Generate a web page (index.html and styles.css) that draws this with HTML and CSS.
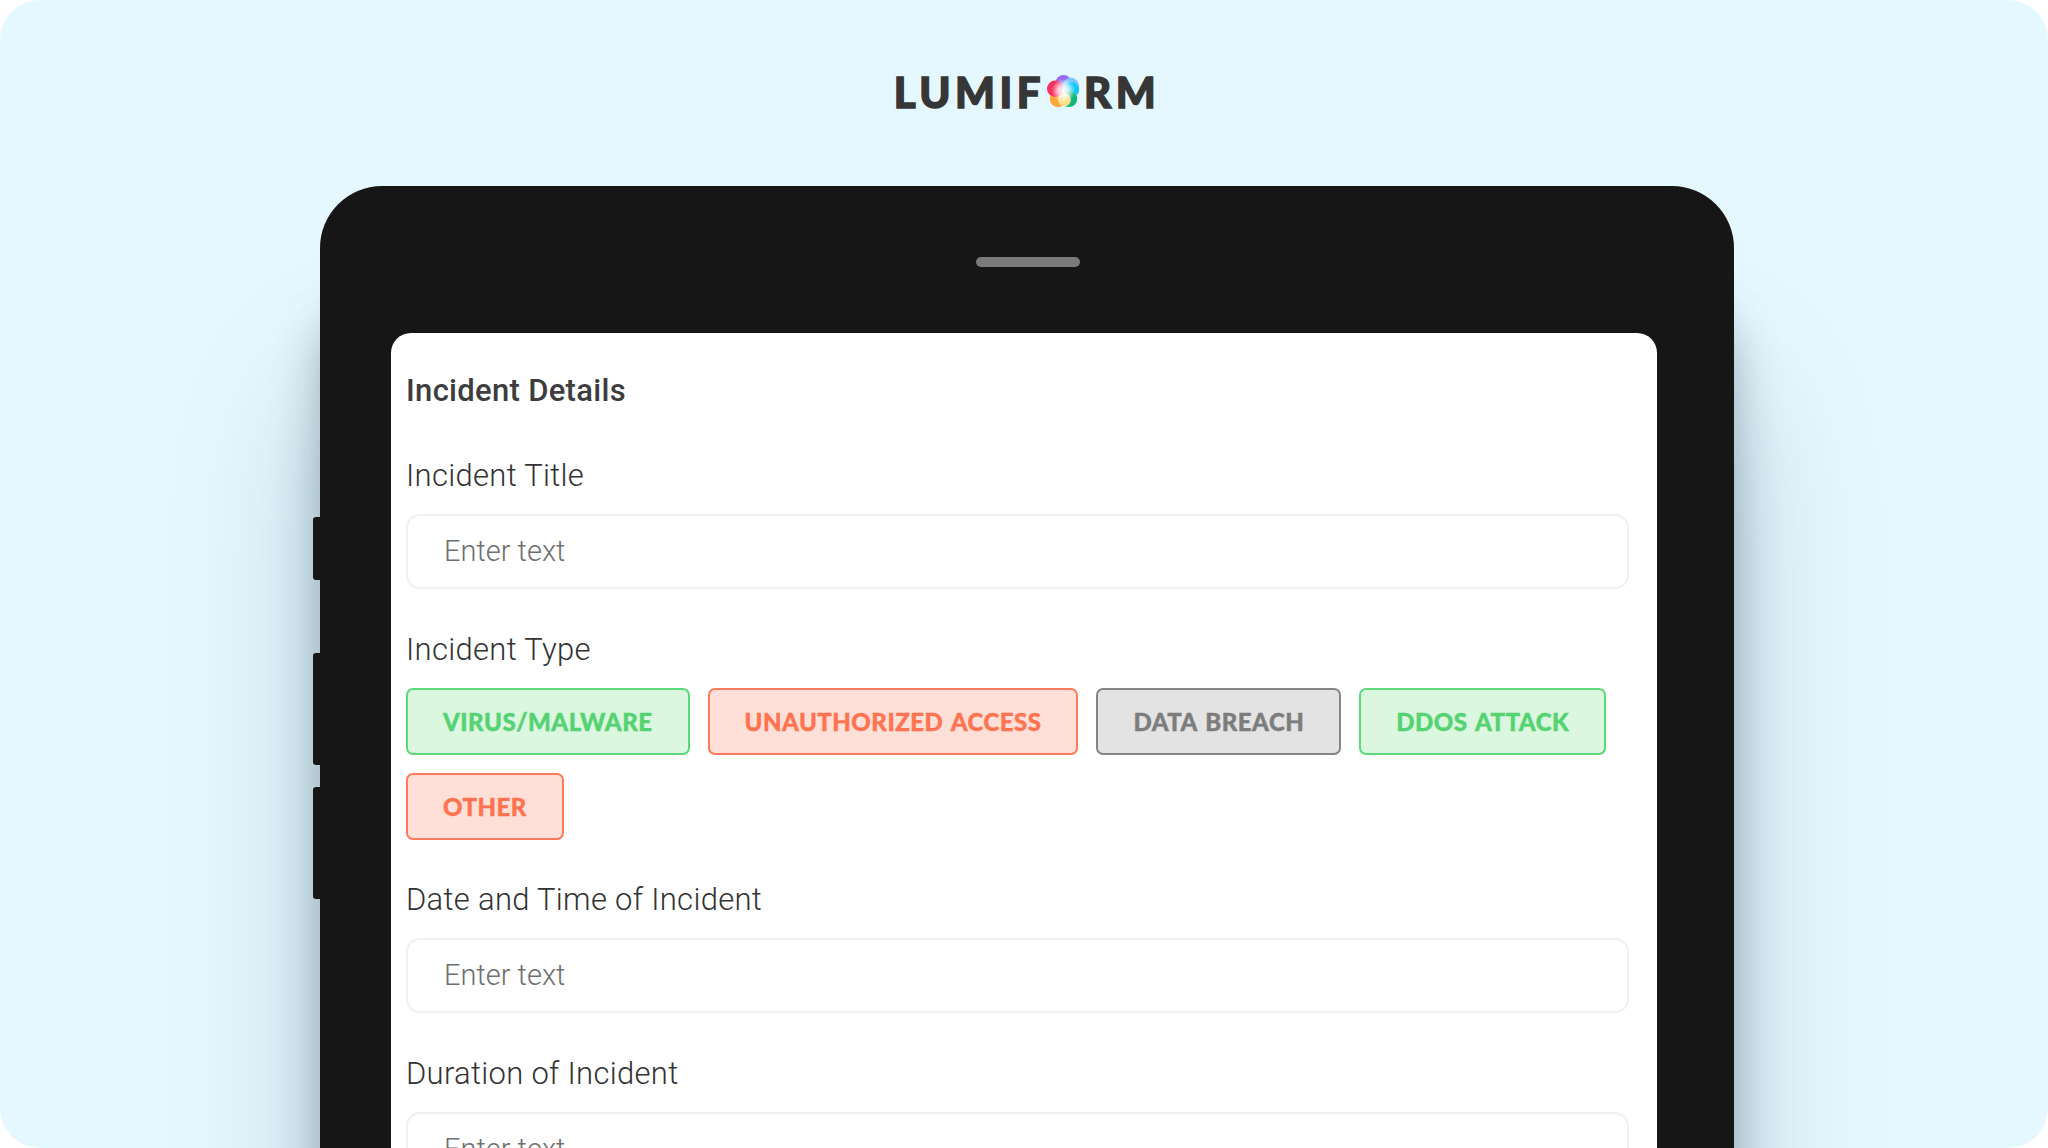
FILE: index.html
```html
<!DOCTYPE html>
<html lang="en">
<head>
    <meta charset="UTF-8">
    <title>Lumiform Incident Details</title>
    <link rel="stylesheet" href="styles.css">
</head>
<body>
    <div class="stage">
        <div class="logo">
            <span>LUMIF</span>
            <svg class="logo-mark" viewBox="0 0 36 36" width="33" height="33">
                <defs>
                    <radialGradient id="glow">
                        <stop offset="0" stop-color="#fff"/>
                        <stop offset="0.45" stop-color="#fff" stop-opacity="0.75"/>
                        <stop offset="1" stop-color="#fff" stop-opacity="0"/>
                    </radialGradient>
                </defs>
                <circle cx="18" cy="9" r="9" fill="#9a6bf0"/>
                <circle cx="26" cy="12" r="9" fill="#7cc4ff"/>
                <circle cx="27" cy="16" r="8" fill="#12c8f8"/>
                <circle cx="24" cy="26" r="9" fill="#14b87c"/>
                <circle cx="12" cy="26" r="9" fill="#ffa63a"/>
                <circle cx="9" cy="15" r="9" fill="#f8305f"/>
                <circle cx="19" cy="27" r="7" fill="#ffe08a"/>
                <circle cx="18" cy="17" r="13" fill="url(#glow)"/>
            </svg>
            <span>RM</span>
        </div>
        <div class="device">
            <div class="side-btn side-btn-1"></div>
            <div class="side-btn side-btn-2"></div>
            <div class="side-btn side-btn-3"></div>
            <div class="speaker"></div>
            <div class="screen">
                <h1>Incident Details</h1>
                <div class="label">Incident Title</div>
                <div class="input">Enter text</div>
                <div class="label">Incident Type</div>
                <div class="chips">
                    <div class="chip chip-green">VIRUS/MALWARE</div>
                    <div class="chip chip-red">UNAUTHORIZED ACCESS</div>
                    <div class="chip chip-grey">DATA BREACH</div>
                    <div class="chip chip-green">DDOS ATTACK</div>
                    <div class="chip chip-red">OTHER</div>
                </div>
                <div class="label">Date and Time of Incident</div>
                <div class="input">Enter text</div>
                <div class="label">Duration of Incident</div>
                <div class="input">Enter text</div>
            </div>
        </div>
    </div>
</body>
</html>
```

FILE: styles.css
```css
html, body {
    margin: 0;
    background: #fff;
}
.stage {
    width: 2048px;
    height: 1148px;
    background: #e6f8ff;
    border-radius: 40px;
    overflow: hidden;
    font-family: 'Roboto', Arial, sans-serif;
}
.logo {
    height: 186px;
    box-sizing: border-box;
    padding: 65px 0 0 6px;
    display: flex;
    justify-content: center;
    align-items: flex-start;
    gap: 2px;
    font-family: 'Lato', Arial, sans-serif;
    font-weight: 900;
    font-size: 42px;
    line-height: 54px;
    letter-spacing: 4.5px;
    color: #363636;
    -webkit-text-stroke: 1.4px #363636;
}
.logo-mark {
    margin-top: 10px;
    margin-right: 2px;
}
.device {
    position: relative;
    width: 1414px;
    height: 1100px;
    margin-left: 320px;
    padding: 147px 77px 0 71px;
    box-sizing: border-box;
    background: #161616;
    border-radius: 62px 62px 0 0;
    box-shadow: 0 120px 45px rgba(35, 55, 65, 0.34), 0 200px 150px rgba(30, 75, 100, 0.24);
}
.side-btn {
    position: absolute;
    left: -7px;
    width: 7px;
    background: #161616;
    border-radius: 3px 0 0 3px;
}
.side-btn-1 {
    top: 331px;
    height: 63px;
}
.side-btn-2 {
    top: 467px;
    height: 112px;
}
.side-btn-3 {
    top: 601px;
    height: 112px;
}
.speaker {
    position: absolute;
    top: 71px;
    left: 656px;
    width: 104px;
    height: 10px;
    background: #7b7b7b;
    border-radius: 5px;
}
.screen {
    height: 900px;
    padding: 0 28px 0 15px;
    background: #fff;
    border-radius: 20px 20px 0 0;
}
h1 {
    margin: 0;
    padding-top: 38px;
    font-size: 31px;
    line-height: 40px;
    font-weight: 500;
    letter-spacing: 0.3px;
    color: #3d3d3d;
}
.label {
    margin-top: 46px;
    padding-top: 1px;
    font-size: 31px;
    line-height: 40px;
    font-weight: 300;
    letter-spacing: 0.3px;
    color: #333;
}
h1 + .label {
    margin-top: 44px;
}
.input {
    box-sizing: border-box;
    height: 75px;
    margin-top: 18px;
    padding-left: 36px;
    border: 2px solid #eef0f1;
    border-radius: 14px;
    font-size: 29px;
    font-weight: 300;
    line-height: 71px;
    color: #6f6f6f;
}
.input + .label {
    margin-top: 40px;
}
.chips {
    display: flex;
    flex-wrap: wrap;
    gap: 18px;
    margin-top: 18px;
}
.chip {
    box-sizing: border-box;
    height: 67px;
    padding: 0 35px;
    border: 2px solid;
    border-radius: 7px;
    font-family: 'Lato', Arial, sans-serif;
    font-weight: 900;
    font-size: 24px;
    line-height: 63px;
    letter-spacing: 0.5px;
    word-spacing: 2px;
    -webkit-text-stroke: 0.4px currentColor;
}
.chip-green {
    background: #dbf7df;
    border-color: #5cd97a;
    color: #55d272;
}
.chip-red {
    background: #ffe0d9;
    border-color: #ff7a59;
    color: #ff7350;
}
.chip-grey {
    background: #e3e3e3;
    border-color: #858585;
    color: #7d7d7d;
}
.chips + .label {
    margin-top: 39px;
}
```
